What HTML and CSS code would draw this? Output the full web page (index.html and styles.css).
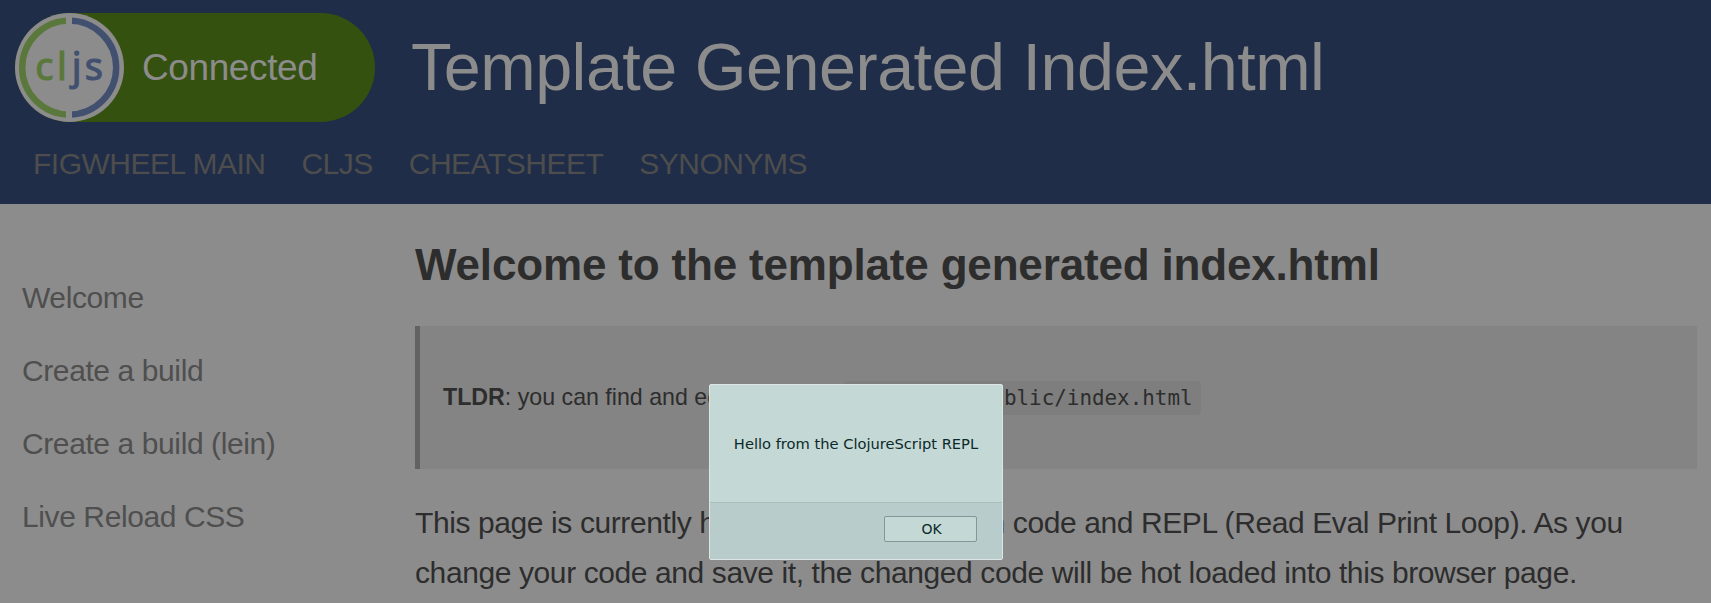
FILE: index.html
```html
<!DOCTYPE html>
<html lang="en">
<head>
<meta charset="utf-8">
<title>Template Generated Index.html</title>
<link rel="stylesheet" href="styles.css">
</head>
<body>
<header class="header">
  <div class="brand">
    <div class="status">
      <svg class="logo" width="110" height="110" viewBox="0 0 110 110">
        <circle cx="54.5" cy="54.5" r="54.5" fill="#8c8c8c"/>
        <path d="M54.2 7.6A47 47 0 0 0 54.2 101.6" fill="none" stroke="#5a783b" stroke-width="6.4"/>
        <path d="M54.2 7.6A47 47 0 0 1 54.2 101.6" fill="none" stroke="#425070" stroke-width="6.4"/>
        <path d="M51 3h6v10h-6zM51 96h6v10h-6z" fill="#8c8c8c"/>
        <text class="logo-text" y="67"><tspan class="green" x="20.3">c</tspan><tspan class="green" x="42.1">l</tspan><tspan class="blue" x="56.7">j</tspan><tspan class="blue" x="69.8">s</tspan></text>
      </svg>
      <span class="status-text">Connected</span>
    </div>
    <h1 class="title">Template Generated Index.html</h1>
  </div>
  <nav class="nav">
    <a>FIGWHEEL MAIN</a><a>CLJS</a><a>CHEATSHEET</a><a>SYNONYMS</a>
  </nav>
</header>
<div class="layout">
  <ul class="sidebar">
    <li>Welcome</li>
    <li>Create a build</li>
    <li>Create a build (lein)</li>
    <li>Live Reload CSS</li>
  </ul>
  <main class="content">
    <h2 class="heading">Welcome to the template generated index.html</h2>
    <blockquote class="tldr"><p class="tldr-text"><b>TLDR</b>: you can find and edit this file at</p><code class="path">resources/public/index.html</code></blockquote>
    <p class="intro">This page is currently hosting your application code and REPL (Read Eval Print Loop). As you<br>change your code and save it, the changed code will be hot loaded into this browser page.</p>
  </main>
</div>
<div class="dialog">
  <div class="message">Hello from the ClojureScript REPL</div>
  <div class="actions"><button class="ok">OK</button></div>
</div>
</body>
</html>
```
FILE: styles.css
```css
* { box-sizing: border-box; }
body {
  margin: 0;
  height: 603px;
  overflow: hidden;
  background: #8c8c8c;
  color: #2d2d2d;
  font-family: "Liberation Sans", Arial, sans-serif;
  font-size: 30px;
  letter-spacing: -0.4px;
  white-space: nowrap;
}
.header { height: 204px; padding: 13px 0 0 15px; background: #202d48; }
.brand { display: flex; height: 109px; letter-spacing: 0; }
.status { display: flex; width: 360px; height: 109px; border-radius: 55px; background: #35510f; color: #8c8c8c; }
.logo { display: block; flex: none; }
.logo-text { font-family: "Noto Sans", "Open Sans", sans-serif; font-size: 38px; stroke-width: 1.1px; }
.green { fill: #5a783b; stroke: #5a783b; }
.blue { fill: #425070; stroke: #425070; }
.status-text { margin-left: 17px; font-size: 37px; letter-spacing: -0.4px; line-height: 109px; }
.title { margin: 0 0 0 36px; color: #8c8c8c; font-size: 66.5px; letter-spacing: -0.5px; font-weight: 400; line-height: 108px; }
.nav { display: flex; gap: 36px; padding-left: 18px; height: 82px; line-height: 84px; color: #4d4d4d; letter-spacing: -0.5px; }
.layout { display: flex; }
.sidebar { width: 415px; margin: 0; padding: 57px 0 0 22px; list-style: none; color: #4f4f4f; }
.sidebar li { height: 73px; line-height: 73px; }
.content { width: 1282px; }
.heading { margin: 0; height: 122px; font-size: 44px; letter-spacing: -0.17px; line-height: 122px; }
.tldr { display: flex; align-items: center; height: 143px; margin: 0; padding-left: 23px; border-left: 5px solid #626262; background: #848484; font-size: 23.2px; letter-spacing: 0; }
.tldr-text { width: 401px; margin: 0; }
.path { width: 357px; height: 34px; border-radius: 4px; padding-left: 9px; background: #7e7e7e; font: 20.9px/34px "DejaVu Sans Mono", monospace; }
.intro { margin: 29px 0 0; line-height: 50px; }
.dialog { position: absolute; left: 709px; top: 384px; width: 294px; height: 176px; border: 1px solid #dce5e4; border-radius: 2px; background: #c4d8d6; color: #0c2929; font-family: "DejaVu Sans", sans-serif; font-size: 14.67px; letter-spacing: 0; }
.message { height: 117px; text-align: center; line-height: 117px; }
.actions { display: flex; justify-content: flex-end; height: 57px; padding: 13px 25px 0 0; border-top: 1px solid #a9bfbd; background: #b8cccb; }
.ok { width: 93px; height: 26px; padding: 0 0 0 2px; border: 1px solid #809896; border-radius: 2px; background: #c4d8d6; color: #0c2929; font: 14px "DejaVu Sans", sans-serif; }
```
